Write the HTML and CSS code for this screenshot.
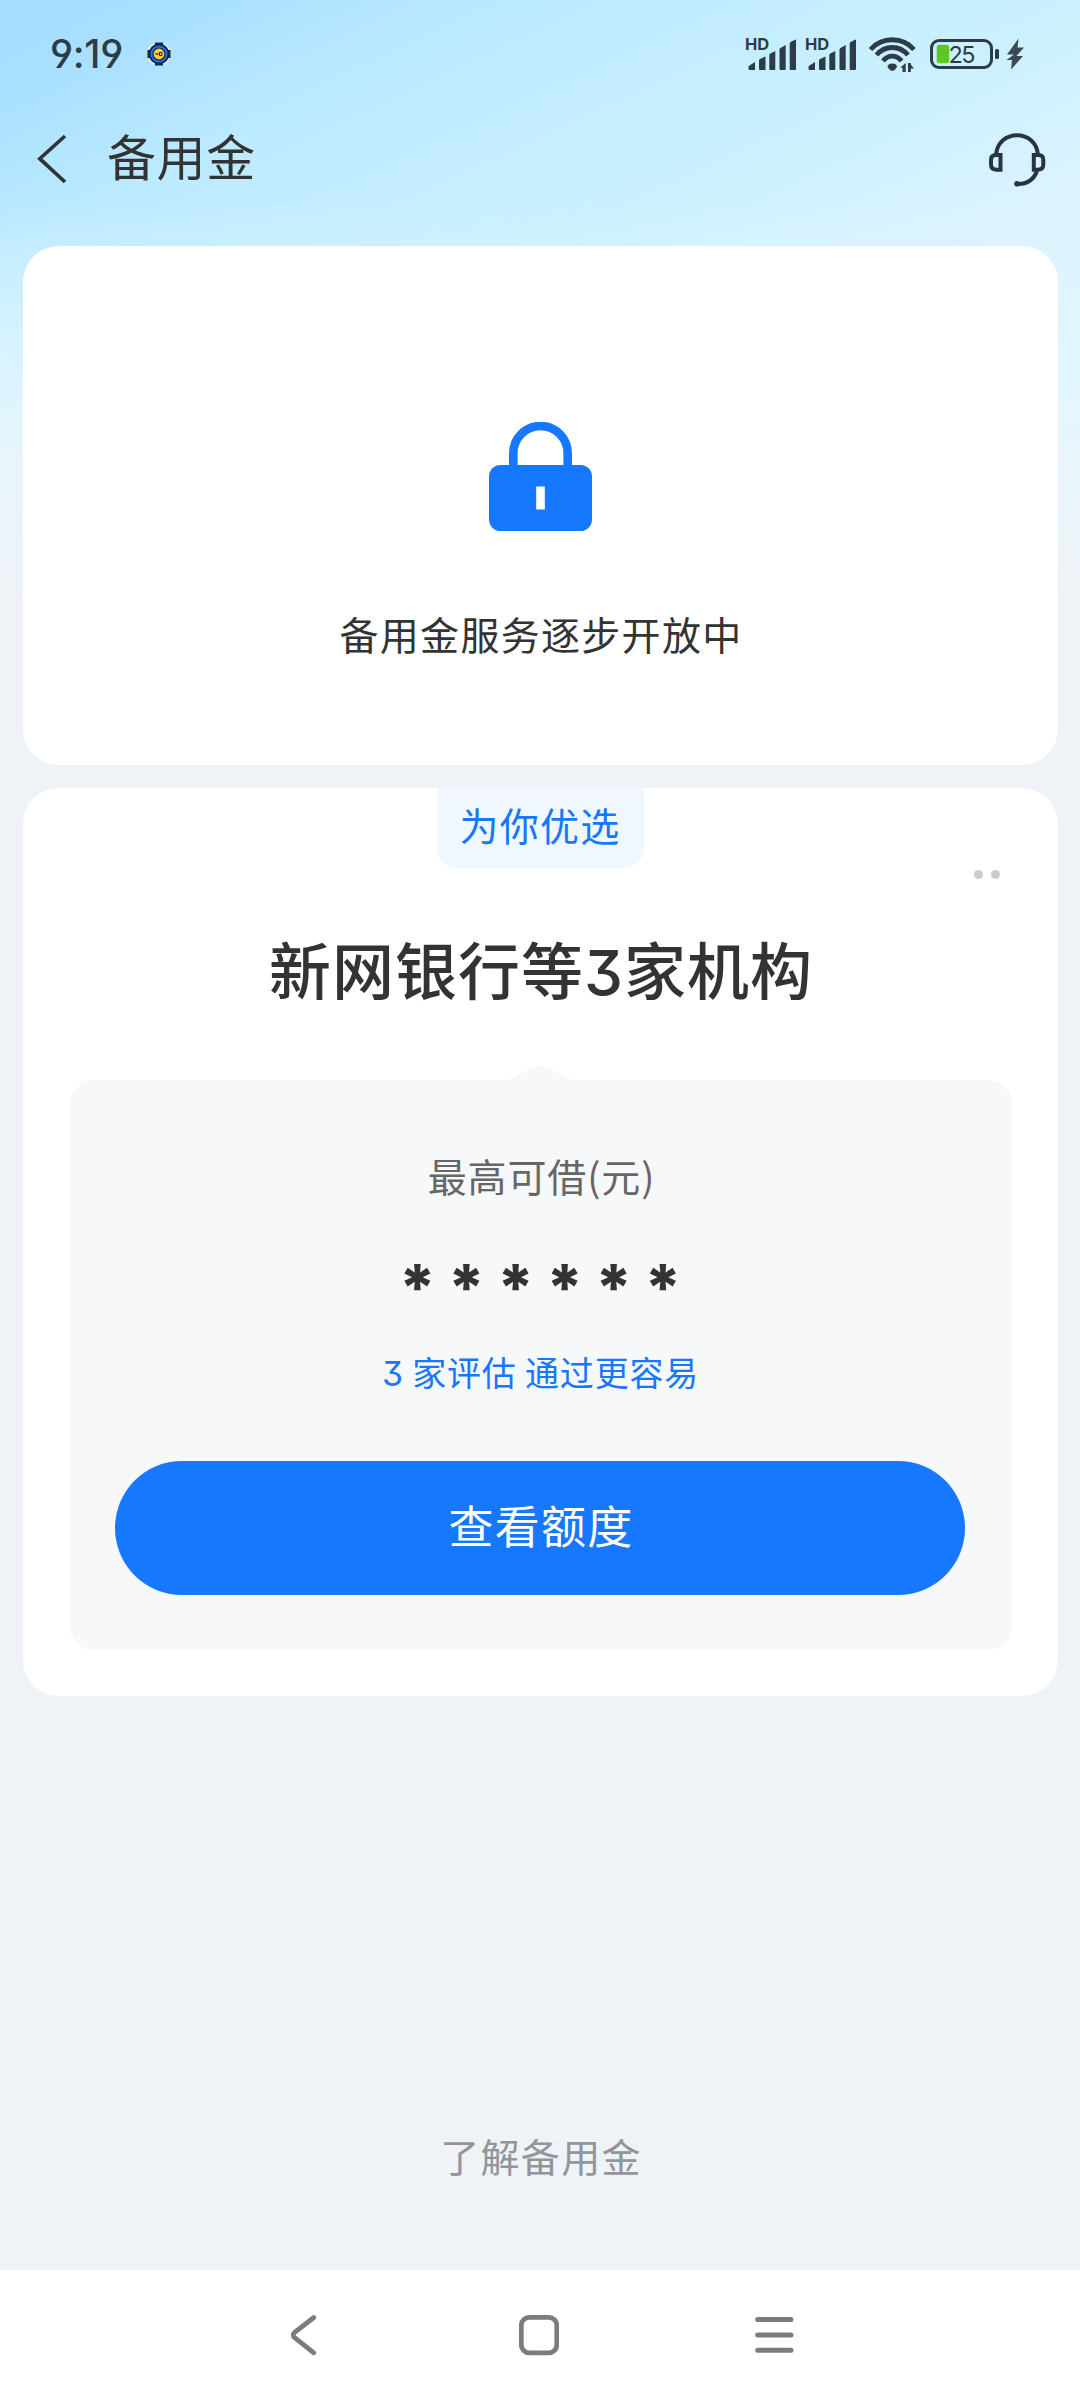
FILE: index.html
```html
<!DOCTYPE html>
<html lang="zh-CN">
<head>
<meta charset="utf-8">
<title>备用金</title>
<link rel="stylesheet" href="styles.css">
</head>
<body>
<div class="page">
  <div class="status">
    <div class="status-left">
      <span class="clock">9:19</span>
      <svg class="emblem" width="24" height="24" viewBox="0 0 24 24">
        <circle cx="12" cy="12" r="11.7" fill="#e6f5fb"/>
        <path d="M8 0.5h8v5H8zM8 18.500h8v5H8zM0.500 8h5v8h-5zM18.500 8h5v8h-5z" fill="#0a2440"/>
        <circle cx="12" cy="12" r="9.500" fill="#2a6fdc" stroke="#0b2450" stroke-width="1.800"/>
        <circle cx="12" cy="12" r="6" fill="#f3cf35" stroke="#12274a" stroke-width="1.200"/>
        <path d="M8.500 12h3" stroke="#c33a1d" stroke-width="2"/>
        <path d="M12.500 10.500h2.500v3h-2.500z" fill="none" stroke="#2c2a18" stroke-width="1"/>
      </svg>
    </div>
    <svg class="status-icons" width="280" height="38" viewBox="745 35 280 38">
      <defs>
        <g id="signal">
          <text class="hd" x="745" y="50.300">HD</text>
          <path d="M748.500 67 Q748.500 66 749.500 65.500L755 62V70h-5.500q-1 0-1-1zM759 60.500q0-1 1-1.500l5.500-2.500V70H760q-1 0-1-1zM769.300 55q0-1 1-1.500l5-2.500V69q0 1-1 1h-4q-1 0-1-1zM779.500 49.500q0-1 1-1.500l5.200-3V69q0 1-1 1h-4.200q-1 0-1-1zM789.700 43.500q0-1 1-1.500l4.300-2.300q1-.5 1 .8V69q0 1-1 1h-4.300q-1 0-1-1z" fill="#2d3d47"/>
        </g>
      </defs>
      <use href="#signal"/>
      <use href="#signal" x="60"/>
      <g fill="none" stroke="#2d3d47" stroke-width="4.800">
        <path d="M870.500 49.500C882 36.500 902.500 36.500 914 49.500"/>
        <path d="M876.500 55C885 45 899.500 45 908 55"/>
        <path d="M883 61C888 54.500 896.500 54.500 901.500 61"/>
      </g>
      <path d="M887.500 67Q887.500 63.500 892.300 63.500T897 67Q895 70.500 892.300 71Q889.500 70.500 887.500 67z" fill="#2d3d47"/>
      <path d="M900.500 67.500L905.700 63V72H902.500V68zM908 63h2.800v1.500L914 68.500h-3.200v3.500h-2.800z" fill="#2d3d47"/>
      <rect x="931.500" y="40.500" width="60" height="27" rx="7.500" fill="none" stroke="#2d3d47" stroke-width="3"/>
      <rect x="936.700" y="44.700" width="12.500" height="18.500" rx="3" fill="#5cc727"/>
      <text class="level" x="948.500" y="62.700">25</text>
      <rect x="995" y="49" width="4" height="10" rx="1.500" fill="#2d3d47"/>
      <path d="M1018.500 38.500L1007 54.500H1014L1006.500 60H1012L1011 69.500L1023 56H1016.500L1024 47.500H1017.500z" fill="#3b4a52"/>
    </svg>
  </div>

  <div class="topbar">
    <svg width="30" height="50" viewBox="37 134 30 50"><path d="M65 136L39.800 158.700L65 182" fill="none" stroke="#333" stroke-width="3.700"/></svg>
    <h1 class="title">备用金</h1>
    <svg class="headset" width="58" height="56" viewBox="988 131 58 56">
      <g fill="none" stroke="#273540" stroke-width="4">
        <path d="M996 155.500C997.500 128.500 1036.500 128.500 1038 155.500"/>
        <path d="M1000.500 155V169.800H997Q991 169.800 991 164.500V160Q991 155 996 155z"/>
        <path d="M1033.800 155V169.800H1037.500Q1043.300 169.800 1043.300 164.500V160Q1043.300 155 1038.500 155z"/>
        <path d="M1037 171Q1032 184.500 1017 184"/>
      </g>
      <circle cx="1017" cy="183.800" r="2.800" fill="#273540"/>
    </svg>
  </div>

  <main class="cards">
    <section class="card locked">
      <svg width="104" height="110" viewBox="489 422 104 110">
        <path d="M513.300 467V453.200a27.200 27.200 0 0 1 54.400 0V467" fill="none" stroke="#1677ff" stroke-width="8.600"/>
        <rect x="489" y="465" width="103" height="66" rx="11.500" fill="#1677ff"/>
        <rect x="536.200" y="486.500" width="8.600" height="23" fill="#fff"/>
      </svg>
      <p class="locked-text">备用金服务逐步开放中</p>
    </section>

    <section class="card offer">
      <div class="badge">为你优选</div>
      <div class="more"><i></i><i></i></div>
      <h2 class="bank">新网银行等<span class="num">3</span>家机构</h2>
      <div class="panel">
        <svg class="notch" width="72" height="15" viewBox="0 0 72 15"><path d="M0 15Q7 14 16 8L28 2Q36-1.500 44 2L56 8Q65 14 72 15z" fill="#f6f8fa"/></svg>
        <p class="label">最高可借(元)</p>
        <p class="amount">******</p>
        <p class="hint"><span class="num">3</span> 家评估 通过更容易</p>
        <button class="cta">查看额度</button>
      </div>
    </section>
  </main>

  <a class="learn">了解备用金</a>

  <nav class="navbar">
    <svg width="40" height="44" viewBox="283 2313 40 44"><path d="M313.800 2317.500L295 2332Q291.500 2335 295 2338L313.800 2352.800" fill="none" stroke="#7c7c7c" stroke-width="4.800" stroke-linecap="round"/></svg>
    <svg width="40" height="44" viewBox="519 2313 40 44"><rect x="521.300" y="2317.300" width="35.500" height="35.500" rx="8" fill="none" stroke="#7c7c7c" stroke-width="4.800"/></svg>
    <svg width="40" height="44" viewBox="754 2313 40 44"><path d="M757.700 2319.600H791M757.700 2335H791M757.700 2350.300H791" stroke="#7c7c7c" stroke-width="5" stroke-linecap="round"/></svg>
  </nav>
</div>
</body>
</html>
```
FILE: styles.css
```css
* { box-sizing: border-box; margin: 0; padding: 0; }

body {
  width: 1080px;
  font-family: "Noto Sans CJK SC", sans-serif;
  color: #333;
}

svg { display: block; flex: none; }

.page {
  height: 2400px;
  display: flex;
  flex-direction: column;
  background:
    linear-gradient(180deg, rgba(226, 246, 255, 0) 200px, rgba(226, 246, 255, 0.8) 380px, #e8f5fb 460px, #eff3f8 610px),
    linear-gradient(155deg, #a4dcff 0, #aae1ff 100px, #bceaff 225px, #caf0ff 440px, #dcf3fe 640px, #e2f5ff 900px);
}

.status {
  height: 108px;
  padding: 0 55px 0 50px;
  display: flex;
  align-items: center;
  justify-content: space-between;
}

.status-left { display: flex; align-items: center; gap: 23px; }

.clock {
  width: 74px;
  font: 500 39px/40px Inter, sans-serif;
  font-feature-settings: "cv04", "cv09";
  letter-spacing: -0.300px;
  color: #2d3d47;
}

.hd { font: 700 16.500px Inter, sans-serif; fill: #2d3d47; }
.level { font: 400 23.500px Inter, sans-serif; letter-spacing: -1.500px; fill: #2d3d47; }

.topbar {
  height: 138px;
  padding: 0 34px 36px 37px;
  display: flex;
  align-items: center;
}

.title {
  margin: 0 0 9px 40px;
  font-size: 49px;
  font-weight: 400;
  line-height: 60px;
  letter-spacing: 0.600px;
}

.headset { margin-left: auto; }

.cards { padding: 0 22px 0 23px; display: grid; gap: 23px; }

.card { background: #fff; border-radius: 36px; }

.locked {
  height: 519px;
  padding-top: 176px;
  display: flex;
  flex-direction: column;
  align-items: center;
}

.locked-text {
  margin-top: 72px;
  padding-left: 1px;
  font-size: 39px;
  line-height: 58px;
  letter-spacing: 1.300px;
}

.offer {
  height: 908px;
  padding: 0 46px 0 47px;
  display: flex;
  flex-direction: column;
  align-items: center;
}

.badge {
  width: 207px;
  height: 80px;
  margin-right: 2px;
  border-radius: 0 0 20px 20px;
  background: #f0f7ff;
  color: #1677ff;
  font-size: 39px;
  line-height: 72px;
  letter-spacing: 1.200px;
  text-align: center;
}

.more { align-self: flex-end; display: flex; gap: 8px; margin: 2px 12px 0 0; }
.more i { width: 9px; height: 9px; border-radius: 50%; background: #ccc; }

.bank {
  margin-top: 43px;
  height: 158px;
  font-size: 62px;
  font-weight: 500;
  line-height: 92px;
  letter-spacing: 1px;
}

.num { font-family: Inter, sans-serif; font-feature-settings: "cv09"; }

.panel {
  position: relative;
  align-self: stretch;
  height: 570px;
  padding: 66px 47px 0 45px;
  border-radius: 24px;
  background: #f6f8fa;
  text-align: center;
}

.notch { position: absolute; left: 434px; top: -14px; }

.label { padding-left: 3px; font-size: 39px; line-height: 58px; letter-spacing: 0.900px; color: #666; }

.amount {
  margin-top: 49px;
  height: 70px;
  padding-left: 12px;
  font: 800 64px/70px Inter, sans-serif;
  letter-spacing: 11.800px;
}

.hint {
  margin-top: 24px;
  padding-left: 1px;
  font-size: 34px;
  line-height: 50px;
  letter-spacing: 0.800px;
  color: #1677ff;
}

.cta {
  display: block;
  width: 850px;
  height: 134px;
  margin-top: 62px;
  border: 0;
  border-radius: 67px;
  background: #1677ff;
  color: #fff;
  font: 400 45px/60px "Noto Sans CJK SC", sans-serif;
  letter-spacing: 1.300px;
  padding: 0 0 6px 2px;
}

.learn {
  margin: auto 0 86px;
  padding-left: 2px;
  font-size: 39px;
  line-height: 58px;
  letter-spacing: 1.300px;
  text-align: center;
  color: #929599;
}

.navbar {
  height: 130px;
  padding: 0 286px 0 283px;
  display: flex;
  align-items: center;
  justify-content: space-between;
  background: #fff;
}
```
